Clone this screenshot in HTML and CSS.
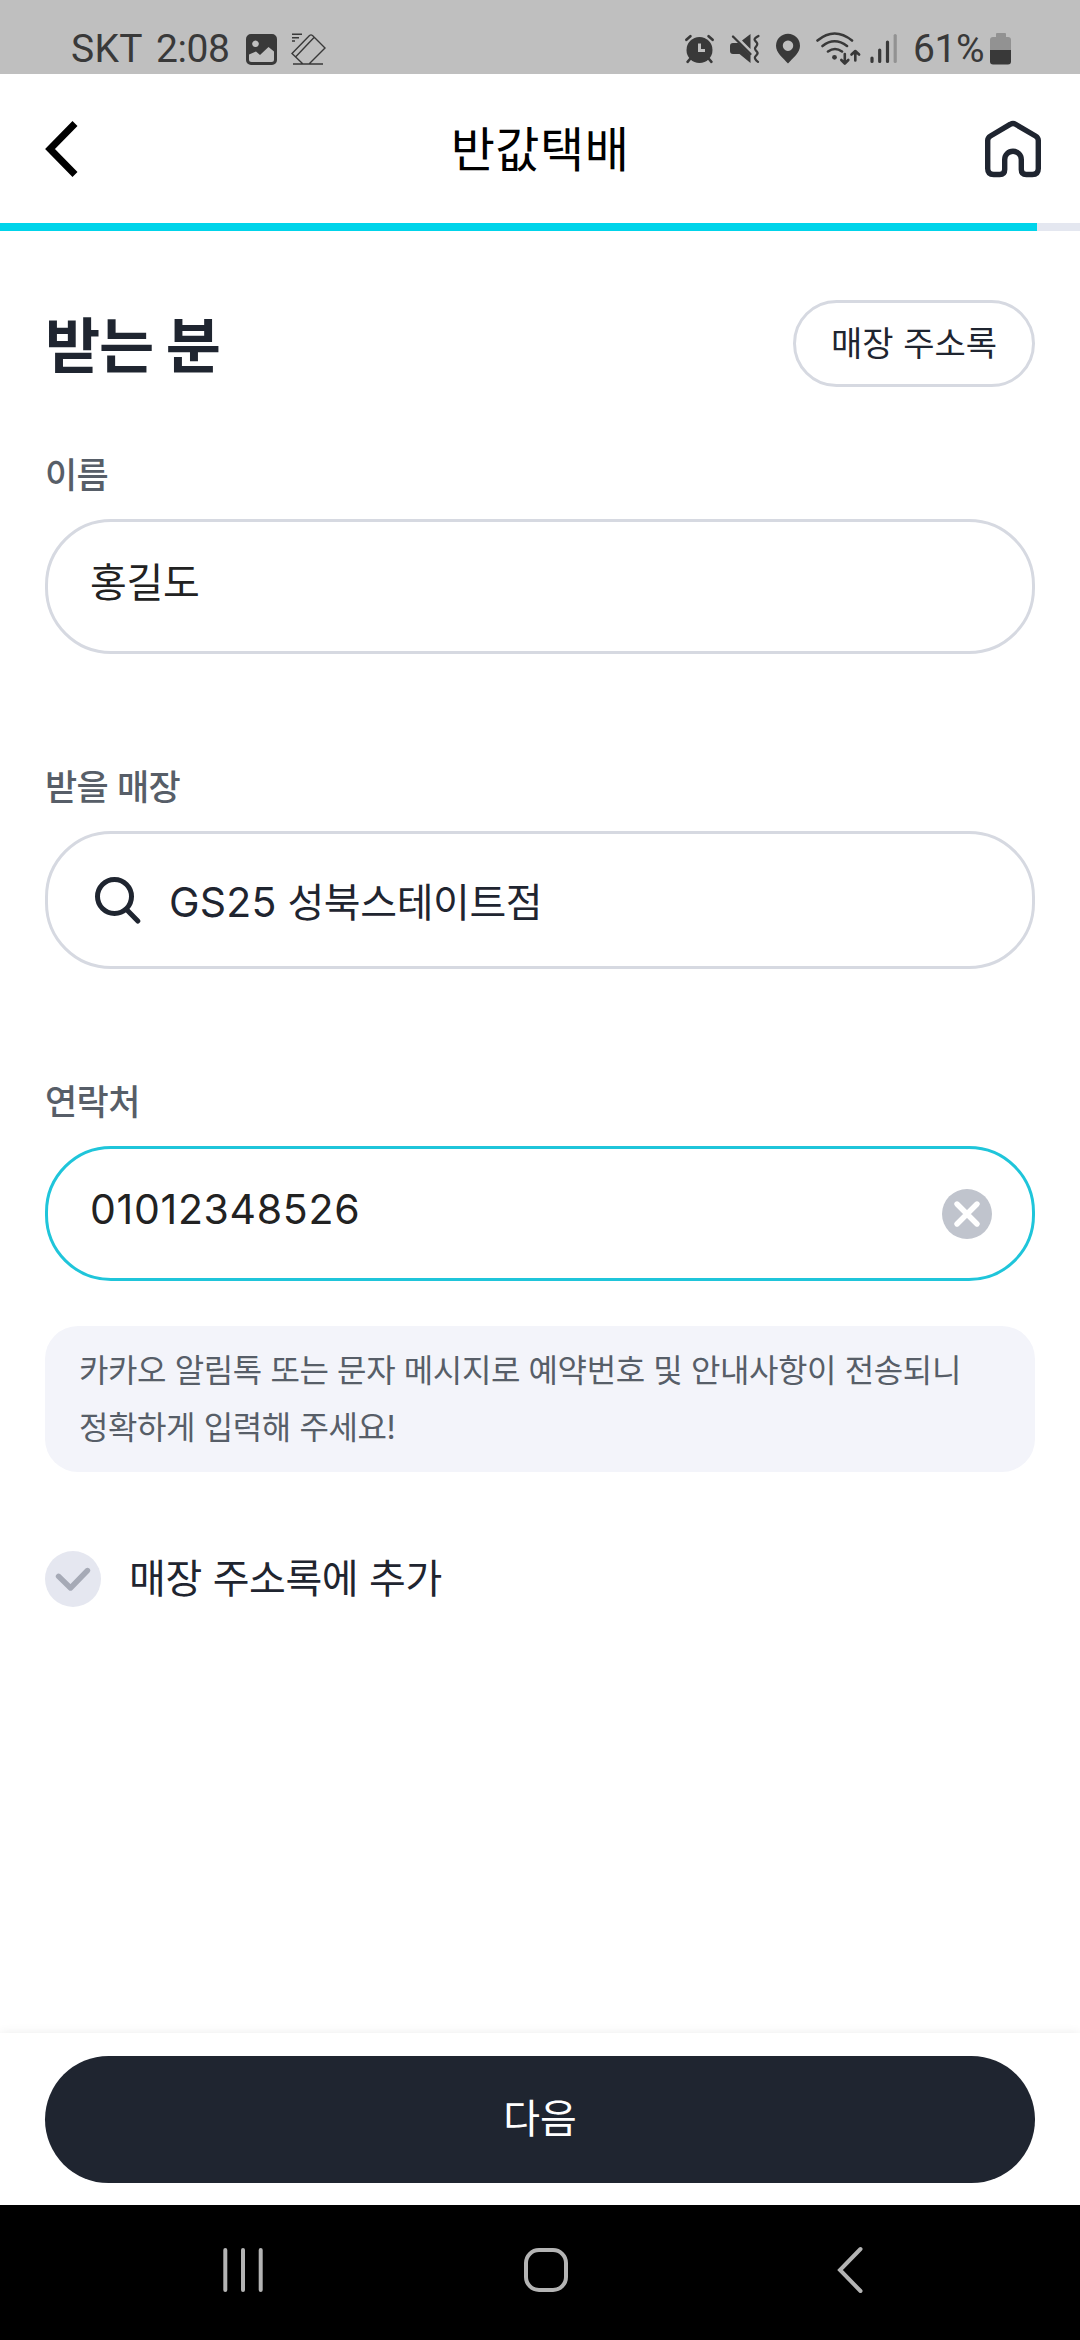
FILE: index.html
```html
<!DOCTYPE html>
<html lang="ko">
<head>
<meta charset="utf-8">
<title>반값택배</title>
<link rel="stylesheet" href="styles.css">
</head>
<body>
<div class="screen">
  <div class="status">
    <div class="status-left">
      <span class="carrier">SKT</span>
      <span class="clock">2:08</span>
      <svg class="ic-image" width="31" height="36" viewBox="246 30 31 36"><path fill="#393939" fill-rule="evenodd" d="M251 34h21a5 5 0 0 1 5 5v21a5 5 0 0 1-5 5h-21a5 5 0 0 1-5-5V39a5 5 0 0 1 5-5zM255.500 40.500a3.300 3.300 0 1 0 .01 0zM249 54.500v5a2.500 2.500 0 0 0 2.500 2.500h20a2.500 2.500 0 0 0 2.500-2.500v-8l-5.500-4.500-8.500 8-4-3.500z"/></svg>
      <svg class="ic-erase" width="35" height="36" viewBox="291 30 35 36"><g fill="none" stroke="#393939" stroke-width="1.400"><path d="M292 34.300h10M292 37.800h7M292 41h3M293 64h30M303 64l-11-10.500 17.500-18q1.500-1.200 3 0L325 48l-16 16M295.500 57L314 37.500"/></g></svg>
    </div>
    <div class="status-right">
      <svg width="30" height="36" viewBox="685 30 30 36"><g fill="none" stroke="#393939" stroke-width="2.600" stroke-linecap="round"><path d="M686.400 39.800l4-3.600M712.600 39.800l-4-3.600M690 59l-2.400 2.800M709 59l2.400 2.800"/></g><circle cx="699.500" cy="50" r="13" fill="#393939"/><path d="M699.500 43.500v7h5.500" fill="none" stroke="#bfbfbf" stroke-width="3"/></svg>
      <svg class="ic-mute" width="31" height="36" viewBox="729 30 31 36"><path fill="#393939" d="M733 43h5.500L750.500 55v8L739.500 54H733q-3 0-3-3v-5q0-3 3-3zM742 40.500l8.500-6.500v15z"/><path d="M733 36.500l17.500 17.500" stroke="#393939" stroke-width="2.300" stroke-linecap="round"/><path d="M758.500 36c-6 3.500-4 4 -2 6.200s.5 3.200-1 5 0 3 1.500 4.500 0 3-1.500 4.500 0 3.800 2.500 5.600" fill="none" stroke="#393939" stroke-width="2.200" stroke-linecap="round"/></svg>
      <svg class="ic-pin" width="24" height="36" viewBox="776 30 24 36"><path fill="#393939" fill-rule="evenodd" d="M788 33.800a12 12 0 0 1 12 12c0 7-7 12.200-12 17.700-5-5.500-12-10.700-12-17.700a12 12 0 0 1 12-12zm0 6.700a5.200 5.200 0 1 0 .01 0z"/></svg>
      <svg class="ic-wifi" width="46" height="36" viewBox="815 30 46 36"><g fill="none" stroke="#393939" stroke-width="2.600" stroke-linecap="round" stroke-linejoin="round"><path d="M817.500 40.500q17-14 34.500 0M822.500 46q12-9.500 24.500 0M828 51.500q7-5 14 0"/><path d="M844.800 54v9M841.300 60l3.500 3.500 3.500-3.500M855.300 60.500v-9M851.500 54.500l3.800-3.500 3.800 3.500"/></g><circle cx="834.500" cy="57.300" r="2.400" fill="#393939"/></svg>
      <svg class="ic-signal" width="28" height="36" viewBox="870 30 28 36"><path d="M872 58v3.500M879.700 50v11.500M887.500 42v19.500" stroke="#393939" stroke-width="3.200" stroke-linecap="round"/><path d="M895.200 35.500v26" stroke="#929292" stroke-width="3.200" stroke-linecap="round"/></svg>
      <span class="percent">61%</span>
      <svg class="ic-battery" width="21" height="36" viewBox="990 30 21 36"><path fill="#929292" d="M997 33h8q1 0 1 1v3h2q3 0 3 3v11h-21V40q0-3 3-3h3v-3q0-1 1-1z"/><path fill="#393939" d="M990 50h21v11.500q0 3-3 3h-15q-3 0-3-3z"/></svg>
    </div>
  </div>

  <header class="header">
    <svg width="34" height="58" viewBox="0 0 34 58"><path d="M30 3.500L5 29l25 25.500" fill="none" stroke="#000" stroke-width="7"/></svg>
    <h1 class="title">반값택배</h1>
    <svg width="56" height="58" viewBox="0 0 56 58"><path d="M25.500 4.200q2.500-1.500 5 0L50.500 16q2.800 1.600 2.800 4.500v28q0 6-6 6h-6q-5 0-5-5V39.500a8.300 8.300 0 0 0-16.600 0v10q0 5-5 5h-6q-6 0-6-6v-28q0-2.900 2.800-4.500z" fill="none" stroke="#1f2530" stroke-width="5.400" stroke-linejoin="round"/></svg>
  </header>
  <div class="progress"><div class="progress-fill" style="width:96%"></div></div>

  <main class="form">
    <div class="form-head">
      <h2 class="heading">받는 분</h2>
      <div class="pill">매장 주소록</div>
    </div>

    <div class="label label-first">이름</div>
    <div class="field">홍길도</div>

    <div class="label">받을 매장</div>
    <div class="field field-store">
      <svg width="48" height="48" viewBox="0 0 48 48"><g fill="none" stroke="#1f2530" stroke-width="5" stroke-linecap="round"><circle cx="21.500" cy="20.500" r="17"/><path d="M34 34l10.800 11"/></g></svg>
      <span><span class="latin">GS25</span> 성북스테이트점</span>
    </div>

    <div class="label">연락처</div>
    <div class="field field-phone">
      <span class="digits">01012348526</span>
      <svg class="clear" width="50" height="50" viewBox="0 0 50 50"><circle cx="25" cy="25" r="25" fill="#c0c4cd"/><path d="M15 15l20 20M35 15L15 35" stroke="#fff" stroke-width="5.400" stroke-linecap="round"/></svg>
    </div>

    <div class="notice">카카오 알림톡 또는 문자 메시지로 예약번호 및 안내사항이 전송되니<br>정확하게 입력해 주세요!</div>

    <div class="check">
      <svg width="56" height="56" viewBox="0 0 56 56"><circle cx="28" cy="28" r="28" fill="#e5e7f0"/><path d="M13.500 25.300L25.500 37 42.500 19.500" fill="none" stroke="#a6aab6" stroke-width="5.400" stroke-linecap="round" stroke-linejoin="round"/></svg>
      <span>매장 주소록에 추가</span>
    </div>
  </main>

  <footer class="footer"><div class="next">다음</div></footer>

  <nav class="nav">
    <svg width="42" height="48" viewBox="0 0 42 48"><path d="M3.300 4v40M21 4v40M38.700 4v40" stroke="#b4b4b4" stroke-width="4" stroke-linecap="round"/></svg>
    <svg class="nav-home" width="46" height="48" viewBox="0 0 46 48"><rect x="3" y="4" width="40" height="40" rx="13" fill="none" stroke="#b4b4b4" stroke-width="4"/></svg>
    <svg class="nav-back" width="28" height="50" viewBox="0 0 28 50"><path d="M24.500 4L4 25l20.500 21" fill="none" stroke="#b4b4b4" stroke-width="4" stroke-linecap="round"/></svg>
  </nav>
</div>
</body>
</html>
```
FILE: styles.css
```css
* { box-sizing: border-box; }
body {
  margin: 0;
  font-family: Inter, "Noto Sans CJK KR", sans-serif;
  color: #1f2530;
  background: #fff;
}
svg { display: block; flex: none; }

.screen {
  width: 1080px;
  height: 2340px;
  display: flex;
  flex-direction: column;
  overflow: hidden;
  white-space: nowrap;
}

.status {
  height: 74px;
  padding: 30px 69px 0 71px;
  display: flex;
  justify-content: space-between;
  background: #bfbfbf;
  color: #393939;
  font: 400 39px/38px Roboto, sans-serif;
}
.status-left, .status-right { display: flex; }
.carrier { width: 85px; letter-spacing: .3px; }
.clock { width: 90px; letter-spacing: -.4px; }
.ic-erase { margin-left: 14px; }
.ic-mute { margin-left: 14px; }
.ic-pin { margin-left: 16px; }
.ic-wifi { margin-left: 15px; }
.ic-signal { margin-left: 9px; }
.percent { width: 77px; margin-left: 15px; letter-spacing: -.4px; }

.header {
  height: 149px;
  padding: 0 39px 0 45px;
  display: flex;
  align-items: center;
  justify-content: space-between;
}
.title {
  margin: 3px 0 0 16px;
  font-size: 48px;
  font-weight: 400;
  line-height: 60px;
  letter-spacing: .5px;
  color: #000;
}
.progress { height: 8px; background: #e4e7f0; }
.progress-fill { height: 8px; background: #00d4ea; }

.form { flex: 1; padding: 69px 45px 0; }
.form-head {
  height: 87px;
  display: flex;
  align-items: center;
  justify-content: space-between;
}
.heading {
  margin: 5px 0 0;
  font-size: 60px;
  font-weight: 700;
  line-height: 72px;
  letter-spacing: -1.3px;
}
.pill {
  width: 242px;
  height: 87px;
  border: 3px solid #d6d9e1;
  border-radius: 44px;
  font-size: 34px;
  font-weight: 400;
  line-height: 81px;
  text-align: center;
}
.label {
  margin-top: 113px;
  font-size: 35px;
  font-weight: 500;
  line-height: 40px;
  letter-spacing: -.6px;
  color: #575e68;
}
.label-first { margin-top: 68px; }
.field {
  height: 135px;
  margin-top: 24px;
  padding: 0 40px 13px 42px;
  display: flex;
  align-items: center;
  border: 3px solid #d6d9e1;
  border-radius: 66px;
  font-size: 40px;
  font-weight: 400;
  letter-spacing: -.3px;
  color: #222;
}
.field-store {
  height: 138px;
  padding: 0 45px;
  gap: 28px;
  color: #1f2530;
  letter-spacing: -.4px;
}
.field-store span { line-height: 48px; }
.field-store > span { margin-top: 5px; }
.latin { font-size: 41px; letter-spacing: .2px; }
.field-phone {
  padding-bottom: 0;
  justify-content: space-between;
  border-color: #1fc5da;
}
.digits {
  margin-bottom: 9px;
  font-size: 41px;
  letter-spacing: .7px;
}

.notice {
  height: 146px;
  margin-top: 45px;
  padding: 16px 34px;
  border-radius: 33px;
  background: #f3f4fa;
  font-size: 32px;
  line-height: 57px;
  letter-spacing: -.4px;
  color: #575e68;
}
.check {
  margin-top: 79px;
  height: 56px;
  display: flex;
  align-items: center;
  gap: 28px;
  font-size: 40px;
  line-height: 56px;
  letter-spacing: -.4px;
}

.footer {
  height: 172px;
  padding: 23px 45px 22px;
  background: #fff;
  box-shadow: 0 0 10px rgba(0, 0, 0, .08);
}
.next {
  height: 127px;
  border-radius: 64px;
  background: #1f2530;
  color: #fff;
  font-size: 40px;
  font-weight: 400;
  line-height: 125px;
  text-align: center;
}

.nav {
  height: 135px;
  padding: 0 216px 5px 222px;
  display: flex;
  align-items: center;
  justify-content: space-between;
  background: #000;
}
.nav-home { margin-right: 9px; }
```
